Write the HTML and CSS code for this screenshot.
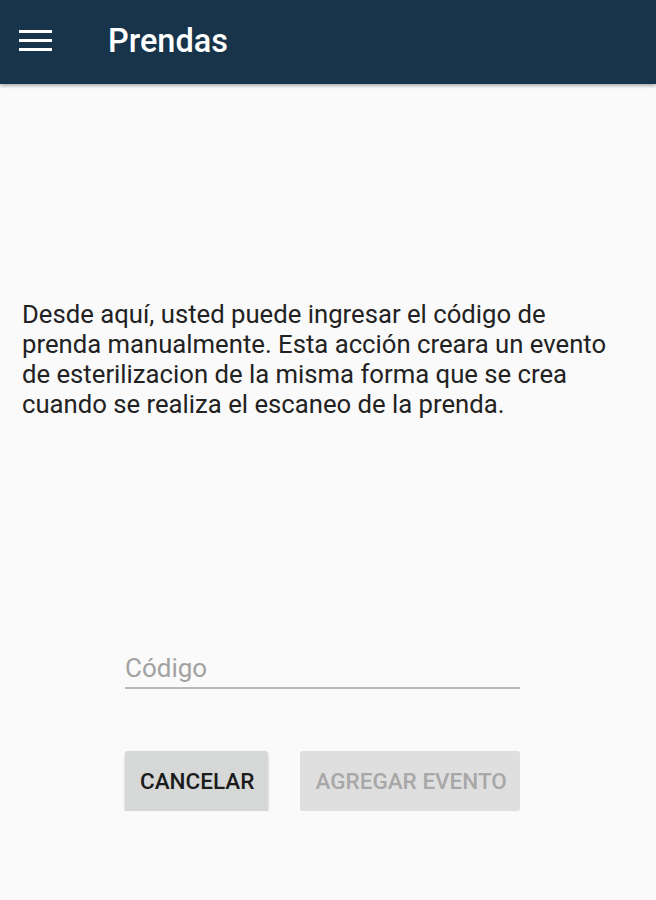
FILE: index.html
```html
<!DOCTYPE html>
<html lang="es">
<head>
  <meta charset="UTF-8">
  <title>Prendas</title>
  <link rel="stylesheet" href="styles.css">
</head>
<body>

  <!-- Toolbar -->
  <header class="toolbar">
    <svg class="menu-icon" width="33" height="21" viewBox="0 0 33 21">
      <rect x="0" y="0" width="33" height="3" fill="#fff"/>
      <rect x="0" y="9" width="33" height="3" fill="#fff"/>
      <rect x="0" y="18" width="33" height="3" fill="#fff"/>
    </svg>
    <h1 class="title">Prendas</h1>
  </header>

  <main class="content">
    <p class="intro">Desde aquí, usted puede ingresar el código de prenda manualmente. Esta acción creara un evento de esterilizacion de la misma forma que se crea cuando se realiza el escaneo de la prenda.</p>

    <form class="code-form">
      <input type="text" class="code-input" placeholder="Código">
      <div class="actions">
        <button type="button" class="btn">CANCELAR</button>
        <button type="submit" class="btn btn-disabled" disabled>AGREGAR EVENTO</button>
      </div>
    </form>
  </main>
</body>
</html>
```

FILE: styles.css
```css
body {
  margin: 0;
  background: #fafafa;
  font-family: Roboto, "Liberation Sans", sans-serif;
  color: #212121;
}

.toolbar {
  height: 84px;
  background: #17344b;
  display: flex;
  align-items: center;
  padding-left: 19px;
  box-shadow: 0 2px 3px rgba(0,0,0,0.3);
}
.menu-icon {
  display: block;
  margin-top: -4px;
}
.title {
  margin: -3px 0 0 56px;
  color: #fff;
  font-size: 32.5px;
  font-weight: 500;
}

.content {
  padding: 0 22px;
}
.intro {
  max-width: 600px;
  margin: 215px 0 0;
  font-size: 25.7px;
  line-height: 30px;
  color: #222;
}

.code-form {
  width: 395px;
  margin: 234px 0 0 103px;
}
.code-input {
  display: block;
  width: 100%;
  box-sizing: border-box;
  border: none;
  border-bottom: 2px solid #b9b9b9;
  background: transparent;
  font-family: inherit;
  font-size: 26px;
  padding: 0 0 4px;
  outline: none;
}
.code-input::placeholder {
  color: #a2a2a2;
}

.actions {
  display: flex;
  gap: 32px;
  margin-top: 62px;
}
.btn {
  height: 60px;
  padding: 0 14px 0 15px;
  border: none;
  border-radius: 3px;
  background: #d6d7d7;
  color: #1b1b1b;
  font-family: inherit;
  font-size: 22.5px;
  font-weight: 500;
  white-space: nowrap;
  box-shadow: 0 2px 3px rgba(0,0,0,0.22);
}
.btn-disabled {
  width: 220px;
  background: #dfdfdf;
  color: #a8a8a8;
  box-shadow: none;
}
```
